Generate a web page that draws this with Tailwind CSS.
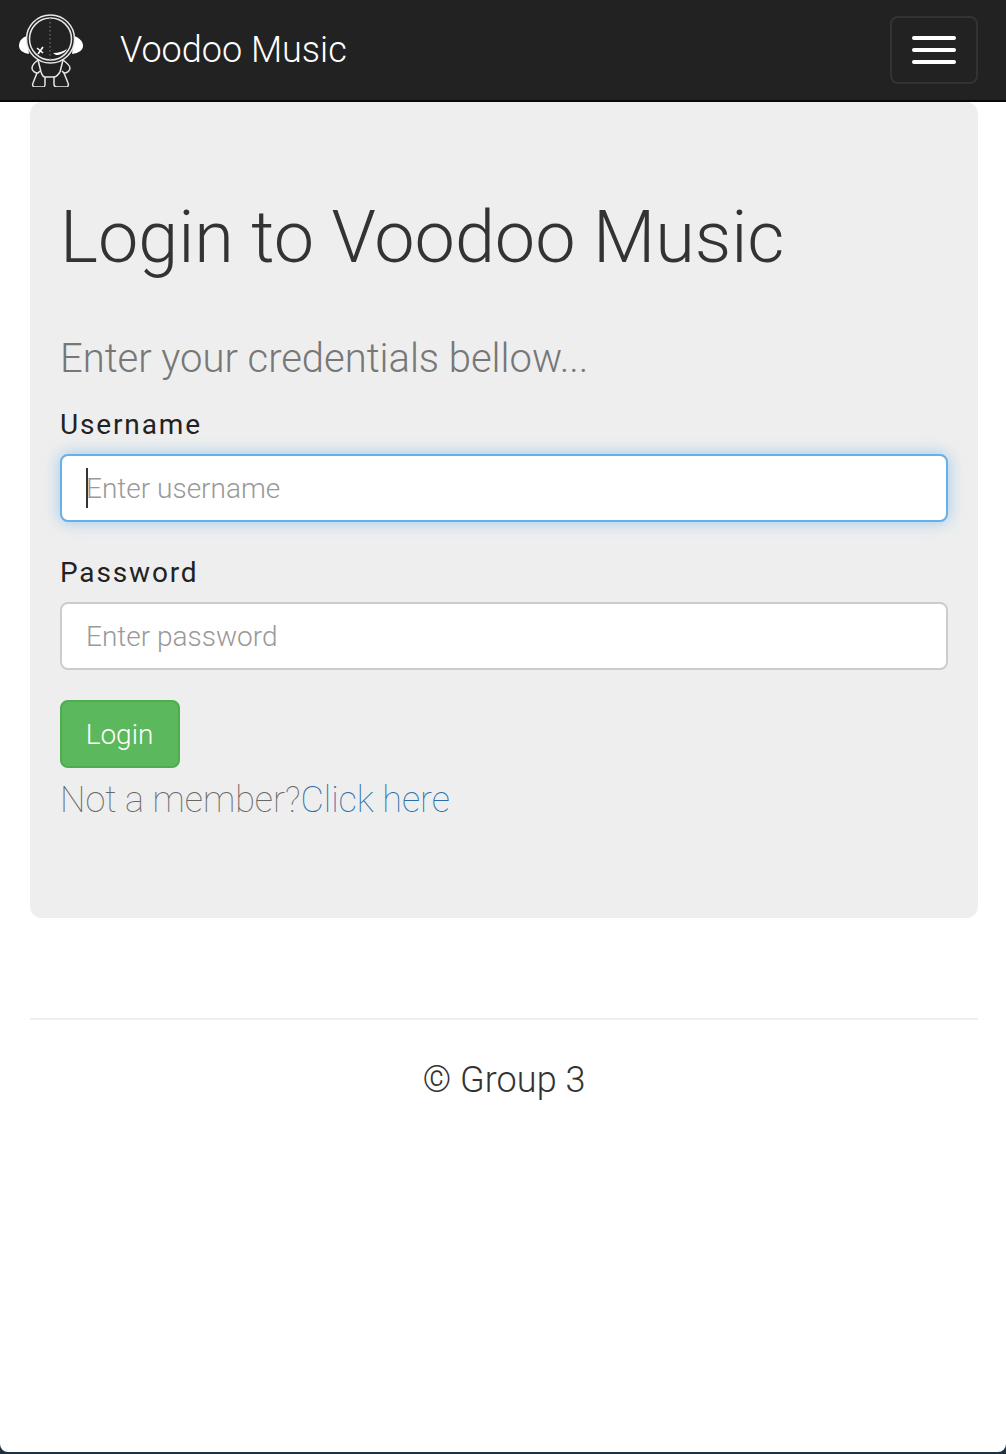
<!DOCTYPE html>
<html lang="en">

<head>
  <meta charset="UTF-8">
  <meta name="viewport" content="width=device-width, initial-scale=1.0">
  <script src="https://cdn.jsdelivr.net/npm/@tailwindcss/browser@4"></script>
  <title>Voodoo Music</title>
</head>

<body class="bg-[#1f3040] font-['Roboto',sans-serif] text-[#333]">
  <div class="h-[1452px] bg-white rounded-b-[8px] flex flex-col overflow-hidden">
    <!-- navbar -->
    <nav class="h-[102px] shrink-0 bg-[#222] border-b-2 border-[#080808] flex items-center justify-between pl-[18px] pr-[28px]">
      <a class="flex items-center gap-[36px]" href="#">
        <svg class="w-[66px] h-[74px]" viewBox="18 13 66 74" fill="none" stroke="#e8e8e8" stroke-width="1.5">
          <path d="M27 36 C21 38 19 42 19 46 C19 50 23 53 29 54 Z" fill="#fff" stroke="none"></path>
          <path d="M74 36 C80 38 83 42 83 46 C83 50 79 53 72 54 Z" fill="#fff" stroke="none"></path>
          <circle cx="50.5" cy="39" r="24" fill="#222"></circle>
          <circle cx="50.5" cy="39" r="21"></circle>
          <path d="M50 18 V60" stroke="#666" stroke-width="1.4" stroke-dasharray="1.5 2.5"></path>
          <path d="M37 48 L43 53 M43 47 L38 54" stroke="#fff" stroke-width="1.6"></path>
          <path d="M53 53 C59 53 64 51 67 49 C65 53 60 55 56 55 Z" fill="#fff" stroke="none"></path>
          <path d="M38 60 C34 63 32 66 32 68 C32 71 35 73 38 73 L40 71"></path>
          <path d="M63 60 C67 63 70 66 70 68 C70 71 67 73 64 73 L62 71"></path>
          <path d="M38 60 L41 72 M63 60 L60 72"></path>
          <path d="M37 73 L33 83 C32 85 33 87 35 87 L43 87 C45 87 45 86 45 84 L45 77 L54 77 L54 84 C54 86 55 87 57 87 L66 87 C68 87 69 85 68 83 L64 73"></path>
          <path d="M41 72 C42 75 44 77 45 77 M60 72 C58 75 56 77 54 77"></path>
        </svg>
        <span class="text-[36px] leading-[50px] font-light text-white">Voodoo Music</span>
      </a>
      <button type="button" class="w-[88px] h-[68px] border-2 border-[#333] rounded-[8px] flex flex-col items-center justify-center gap-[8px]">
        <span class="block w-[44px] h-[4px] rounded-[2px] bg-white"></span>
        <span class="block w-[44px] h-[4px] rounded-[2px] bg-white"></span>
        <span class="block w-[44px] h-[4px] rounded-[2px] bg-white"></span>
      </button>
    </nav>

    <div class="pl-[30px] pr-[28px] flex-1">
      <!-- jumbotron -->
      <div class="h-[816px] bg-[#eee] rounded-[12px] px-[30px] pt-[96px]">
        <h1 class="text-[72px] leading-[80px] font-light tracking-[-0.05px]">Login to Voodoo Music</h1>
        <p class="mt-[59px] text-[40px] leading-[44px] font-light text-[#777] tracking-[-0.03px]">Enter your credentials bellow...</p>
        <form class="mt-[24px]">
          <label class="block text-[28px] leading-[40px] font-normal tracking-[1.85px] text-[#222]" for="username">Username</label>
          <div class="relative mt-[9px]">
            <input id="username" type="text" placeholder="Enter username"
              class="block w-full h-[68px] px-[24px] bg-white border-2 border-[#66afe9] rounded-[8px] text-[28px] font-light placeholder:text-[#999] shadow-[0_0_16px_rgba(102,175,233,0.6)] outline-none">
            <span class="absolute left-[26px] top-[14px] w-[2px] h-[40px] bg-[#333]"></span>
          </div>
          <label class="block mt-[31px] text-[28px] leading-[40px] font-normal tracking-[1.85px] text-[#222]" for="password">Password</label>
          <input id="password" type="password" placeholder="Enter password"
            class="block mt-[9px] w-full h-[68px] px-[24px] bg-white border-2 border-[#ccc] rounded-[8px] text-[28px] font-light placeholder:text-[#999] outline-none">
          <button type="button" class="block mt-[30px] w-[120px] h-[68px] pt-[2px] pr-[1px] bg-[#5cb85c] border-2 border-[#4cae4c] rounded-[8px] text-[28px] font-light text-white">Login</button>
        </form>
        <p class="mt-[11px] text-[36px] leading-[42px] font-thin text-[#666] tracking-[-0.05px]">Not a member?<a class="text-[#2a6fad]" href="#">Click here</a></p>
      </div>

      <!-- footer -->
      <hr class="mt-[100px] border-t-2 border-[#eee]">
      <footer class="mt-[40px] text-center text-[36px] leading-[40px] font-light tracking-[0.05px]">© Group 3</footer>
    </div>
  </div>
</body>

</html>
